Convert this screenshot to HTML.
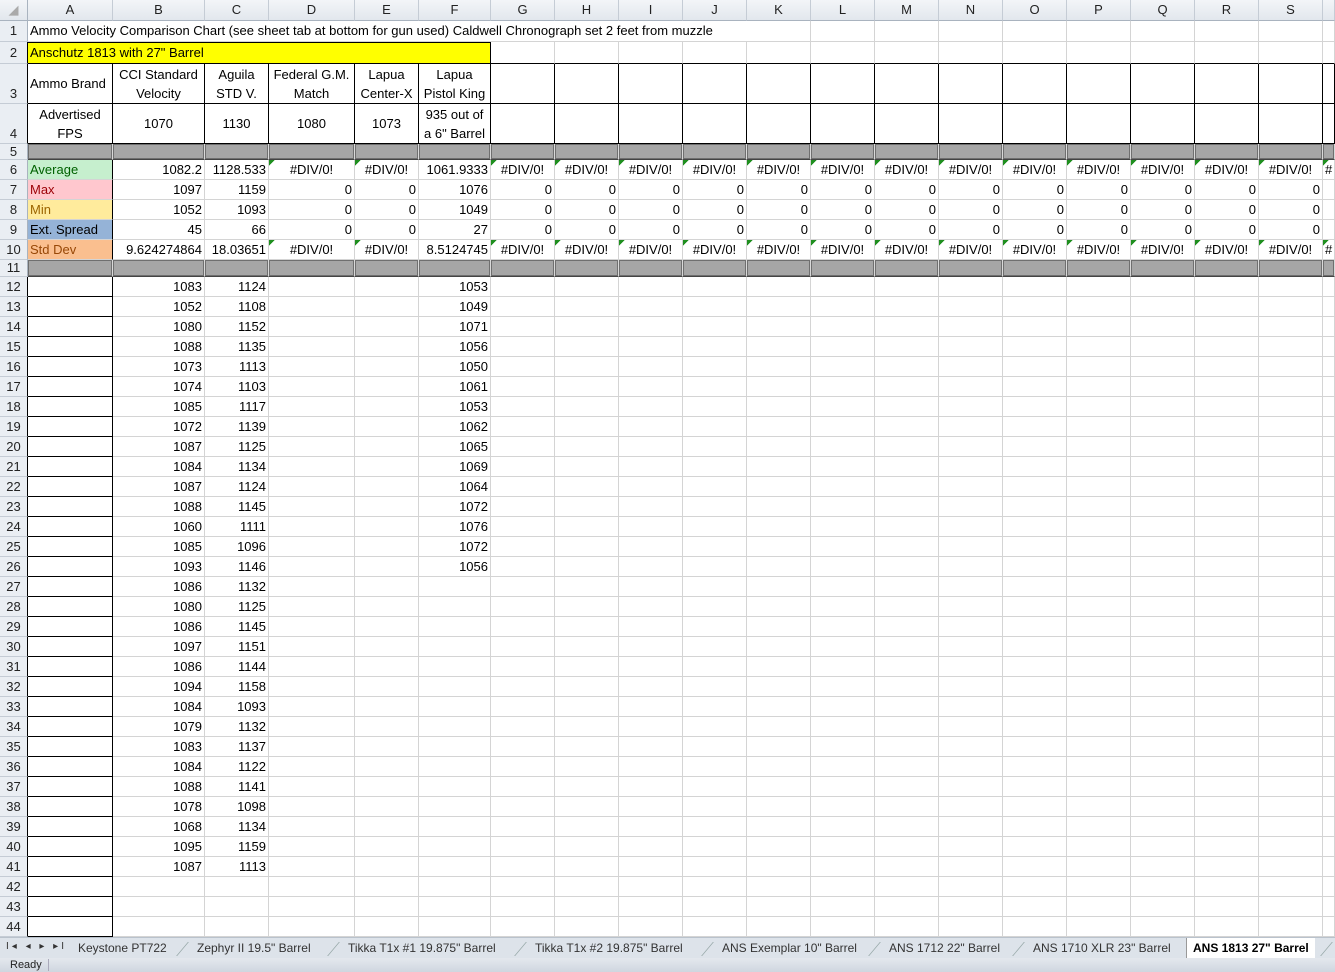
<!DOCTYPE html>
<html><head><meta charset="utf-8"><style>
*{margin:0;padding:0;box-sizing:content-box}
body{width:1335px;height:972px;overflow:hidden;background:#fff;font-family:"Liberation Sans",sans-serif;font-size:13px;color:#000;position:relative}
table{border-collapse:separate;border-spacing:0;table-layout:fixed;width:1335px;position:absolute;left:0;top:0}
td,th{border-right:1px solid #d4d4d4;border-bottom:1px solid #d4d4d4;padding:0 2px;white-space:nowrap;overflow:hidden;font-weight:normal;height:19px;line-height:19px;vertical-align:bottom}
th{background:#eaeef3;color:#222;text-align:center;border-right:1px solid #a9b3bf;border-bottom:1px solid #c5ccd5;padding:0}
tr.h th{background:linear-gradient(#f3f5f8,#e2e7ed);height:20px;line-height:20px;vertical-align:middle;border-bottom:1px solid #a9b3bf;border-right:1px solid #c5ccd5}
tr.h th:first-child{border-right:1px solid #a9b3bf}
tr.r20 td,tr.r20 th{height:19px;line-height:19px}
tr.r21 td,tr.r21 th{height:20px;line-height:20px}
tr.t td,tr.t th{height:39px;line-height:19px}
tr.s td,tr.s th{height:15px;line-height:15px}
tr.s2 td,tr.s2 th{height:16px;line-height:16px}
.n{text-align:right}
.c{text-align:center}
.b{border-right:1px solid #000;border-bottom:1px solid #000}
.bb{border-bottom:1px solid #000}
.lb{border-right:1px solid #000}
.y{background:#ffff00;border:1px solid #000;border-left:none}
tr.r21 td.y{height:19px}
.g{background:#a6a6a6;box-shadow:inset 0 0 0 1px #6f6f6f;border-right:1px solid #d9d9d9;border-bottom:1px solid #444}
.e{background:linear-gradient(135deg,#1f8f1f 0,#1f8f1f 4px,transparent 4px) no-repeat;text-align:center}
.av{background:#c6efce;color:#006100}
.mx{background:#ffc7ce;color:#9c0006}
.mn{background:#ffeb9c;color:#9c6500}
.sp{background:#95b3d7}
.sd{background:#fabf8f;color:#974706}
#tabs{position:absolute;left:0;top:937px;width:1335px;height:21px;background:#dde3ea;border-top:1px solid #b9c2cc;font-size:12px;color:#333}
#tabs span{position:absolute;top:3px;white-space:nowrap}
#tabs .act{background:#fff;font-weight:bold;color:#000;top:0;height:21px;line-height:21px;padding:0 6px;border-left:1px solid #999}
#status{position:absolute;left:0;top:958px;width:1335px;height:14px;background:linear-gradient(#e4e8ee,#cfd6df);font-size:11px;color:#222}
.sl{position:absolute;top:4px;width:12px;height:14px;border-left:1px solid #9aa;transform:skewX(-40deg)}
</style></head><body>
<table>
<colgroup><col style="width:28px"><col style="width:85px"><col style="width:92px"><col style="width:64px"><col style="width:86px"><col style="width:64px"><col style="width:72px"><col style="width:64px"><col style="width:64px"><col style="width:64px"><col style="width:64px"><col style="width:64px"><col style="width:64px"><col style="width:64px"><col style="width:64px"><col style="width:64px"><col style="width:64px"><col style="width:64px"><col style="width:64px"><col style="width:64px"><col style="width:12px"></colgroup>
<tr class="h"><th style="color:#aaa">◢<th>A<th>B<th>C<th>D<th>E<th>F<th>G<th>H<th>I<th>J<th>K<th>L<th>M<th>N<th>O<th>P<th>Q<th>R<th>S<th></tr>
<tr class="r21"><th>1<td colspan="11">Ammo Velocity Comparison Chart (see sheet tab at bottom for gun used) Caldwell Chronograph set 2 feet from muzzle<td><td><td><td><td><td><td><td><td></tr>
<tr class="r21"><th class="lb">2<td colspan="6" class="y">Anschutz 1813 with 27" Barrel<td class="bb"><td class="bb"><td class="bb"><td class="bb"><td class="bb"><td class="bb"><td class="bb"><td class="bb"><td class="bb"><td class="bb"><td class="bb"><td class="bb"><td class="bb"><td class="bb"></tr>
<tr class="t"><th class="lb">3<td class="b" style="vertical-align:middle">Ammo Brand<td class="b c">CCI Standard<br>Velocity<td class="b c">Aguila<br>STD V.<td class="b c">Federal G.M.<br>Match<td class="b c">Lapua<br>Center-X<td class="b c">Lapua<br>Pistol King<td class="b"><td class="b"><td class="b"><td class="b"><td class="b"><td class="b"><td class="b"><td class="b"><td class="b"><td class="b"><td class="b"><td class="b"><td class="b"><td class="b"></tr>
<tr class="t"><th class="lb">4<td class="b c">Advertised<br>FPS<td class="b c" style="vertical-align:middle">1070<td class="b c" style="vertical-align:middle">1130<td class="b c" style="vertical-align:middle">1080<td class="b c" style="vertical-align:middle">1073<td class="b c">935 out of<br>a 6" Barrel<td class="b"><td class="b"><td class="b"><td class="b"><td class="b"><td class="b"><td class="b"><td class="b"><td class="b"><td class="b"><td class="b"><td class="b"><td class="b"><td class="b"></tr>
<tr class="s"><th>5<td class="g"><td class="g"><td class="g"><td class="g"><td class="g"><td class="g"><td class="g"><td class="g"><td class="g"><td class="g"><td class="g"><td class="g"><td class="g"><td class="g"><td class="g"><td class="g"><td class="g"><td class="g"><td class="g"><td class="g"></tr>
<tr class="r20"><th>6<td class="av lb">Average<td class="n">1082.2<td class="n">1128.533<td class="e">#DIV/0!<td class="e">#DIV/0!<td class="n">1061.9333<td class="e">#DIV/0!<td class="e">#DIV/0!<td class="e">#DIV/0!<td class="e">#DIV/0!<td class="e">#DIV/0!<td class="e">#DIV/0!<td class="e">#DIV/0!<td class="e">#DIV/0!<td class="e">#DIV/0!<td class="e">#DIV/0!<td class="e">#DIV/0!<td class="e">#DIV/0!<td class="e">#DIV/0!<td class="e" style="text-align:left">#</tr>
<tr class="r20"><th>7<td class="mx lb">Max<td class="n">1097<td class="n">1159<td class="n">0<td class="n">0<td class="n">1076<td class="n">0<td class="n">0<td class="n">0<td class="n">0<td class="n">0<td class="n">0<td class="n">0<td class="n">0<td class="n">0<td class="n">0<td class="n">0<td class="n">0<td class="n">0<td></tr>
<tr class="r20"><th>8<td class="mn lb">Min<td class="n">1052<td class="n">1093<td class="n">0<td class="n">0<td class="n">1049<td class="n">0<td class="n">0<td class="n">0<td class="n">0<td class="n">0<td class="n">0<td class="n">0<td class="n">0<td class="n">0<td class="n">0<td class="n">0<td class="n">0<td class="n">0<td></tr>
<tr class="r20"><th>9<td class="sp lb">Ext. Spread<td class="n">45<td class="n">66<td class="n">0<td class="n">0<td class="n">27<td class="n">0<td class="n">0<td class="n">0<td class="n">0<td class="n">0<td class="n">0<td class="n">0<td class="n">0<td class="n">0<td class="n">0<td class="n">0<td class="n">0<td class="n">0<td></tr>
<tr class="r20"><th>10<td class="sd lb">Std Dev<td class="n">9.624274864<td class="n">18.03651<td class="e">#DIV/0!<td class="e">#DIV/0!<td class="n">8.5124745<td class="e">#DIV/0!<td class="e">#DIV/0!<td class="e">#DIV/0!<td class="e">#DIV/0!<td class="e">#DIV/0!<td class="e">#DIV/0!<td class="e">#DIV/0!<td class="e">#DIV/0!<td class="e">#DIV/0!<td class="e">#DIV/0!<td class="e">#DIV/0!<td class="e">#DIV/0!<td class="e">#DIV/0!<td class="e" style="text-align:left">#</tr>
<tr class="s2"><th>11<td class="g"><td class="g"><td class="g"><td class="g"><td class="g"><td class="g"><td class="g"><td class="g"><td class="g"><td class="g"><td class="g"><td class="g"><td class="g"><td class="g"><td class="g"><td class="g"><td class="g"><td class="g"><td class="g"><td class="g"></tr>
<tr class="r20"><th class="lb">12<td class="b"><td class="n">1083<td class="n">1124<td><td><td class="n">1053<td><td><td><td><td><td><td><td><td><td><td><td><td><td><td></tr>
<tr class="r20"><th class="lb">13<td class="b"><td class="n">1052<td class="n">1108<td><td><td class="n">1049<td><td><td><td><td><td><td><td><td><td><td><td><td><td><td></tr>
<tr class="r20"><th class="lb">14<td class="b"><td class="n">1080<td class="n">1152<td><td><td class="n">1071<td><td><td><td><td><td><td><td><td><td><td><td><td><td><td></tr>
<tr class="r20"><th class="lb">15<td class="b"><td class="n">1088<td class="n">1135<td><td><td class="n">1056<td><td><td><td><td><td><td><td><td><td><td><td><td><td><td></tr>
<tr class="r20"><th class="lb">16<td class="b"><td class="n">1073<td class="n">1113<td><td><td class="n">1050<td><td><td><td><td><td><td><td><td><td><td><td><td><td><td></tr>
<tr class="r20"><th class="lb">17<td class="b"><td class="n">1074<td class="n">1103<td><td><td class="n">1061<td><td><td><td><td><td><td><td><td><td><td><td><td><td><td></tr>
<tr class="r20"><th class="lb">18<td class="b"><td class="n">1085<td class="n">1117<td><td><td class="n">1053<td><td><td><td><td><td><td><td><td><td><td><td><td><td><td></tr>
<tr class="r20"><th class="lb">19<td class="b"><td class="n">1072<td class="n">1139<td><td><td class="n">1062<td><td><td><td><td><td><td><td><td><td><td><td><td><td><td></tr>
<tr class="r20"><th class="lb">20<td class="b"><td class="n">1087<td class="n">1125<td><td><td class="n">1065<td><td><td><td><td><td><td><td><td><td><td><td><td><td><td></tr>
<tr class="r20"><th class="lb">21<td class="b"><td class="n">1084<td class="n">1134<td><td><td class="n">1069<td><td><td><td><td><td><td><td><td><td><td><td><td><td><td></tr>
<tr class="r20"><th class="lb">22<td class="b"><td class="n">1087<td class="n">1124<td><td><td class="n">1064<td><td><td><td><td><td><td><td><td><td><td><td><td><td><td></tr>
<tr class="r20"><th class="lb">23<td class="b"><td class="n">1088<td class="n">1145<td><td><td class="n">1072<td><td><td><td><td><td><td><td><td><td><td><td><td><td><td></tr>
<tr class="r20"><th class="lb">24<td class="b"><td class="n">1060<td class="n">1111<td><td><td class="n">1076<td><td><td><td><td><td><td><td><td><td><td><td><td><td><td></tr>
<tr class="r20"><th class="lb">25<td class="b"><td class="n">1085<td class="n">1096<td><td><td class="n">1072<td><td><td><td><td><td><td><td><td><td><td><td><td><td><td></tr>
<tr class="r20"><th class="lb">26<td class="b"><td class="n">1093<td class="n">1146<td><td><td class="n">1056<td><td><td><td><td><td><td><td><td><td><td><td><td><td><td></tr>
<tr class="r20"><th class="lb">27<td class="b"><td class="n">1086<td class="n">1132<td><td><td><td><td><td><td><td><td><td><td><td><td><td><td><td><td><td></tr>
<tr class="r20"><th class="lb">28<td class="b"><td class="n">1080<td class="n">1125<td><td><td><td><td><td><td><td><td><td><td><td><td><td><td><td><td><td></tr>
<tr class="r20"><th class="lb">29<td class="b"><td class="n">1086<td class="n">1145<td><td><td><td><td><td><td><td><td><td><td><td><td><td><td><td><td><td></tr>
<tr class="r20"><th class="lb">30<td class="b"><td class="n">1097<td class="n">1151<td><td><td><td><td><td><td><td><td><td><td><td><td><td><td><td><td><td></tr>
<tr class="r20"><th class="lb">31<td class="b"><td class="n">1086<td class="n">1144<td><td><td><td><td><td><td><td><td><td><td><td><td><td><td><td><td><td></tr>
<tr class="r20"><th class="lb">32<td class="b"><td class="n">1094<td class="n">1158<td><td><td><td><td><td><td><td><td><td><td><td><td><td><td><td><td><td></tr>
<tr class="r20"><th class="lb">33<td class="b"><td class="n">1084<td class="n">1093<td><td><td><td><td><td><td><td><td><td><td><td><td><td><td><td><td><td></tr>
<tr class="r20"><th class="lb">34<td class="b"><td class="n">1079<td class="n">1132<td><td><td><td><td><td><td><td><td><td><td><td><td><td><td><td><td><td></tr>
<tr class="r20"><th class="lb">35<td class="b"><td class="n">1083<td class="n">1137<td><td><td><td><td><td><td><td><td><td><td><td><td><td><td><td><td><td></tr>
<tr class="r20"><th class="lb">36<td class="b"><td class="n">1084<td class="n">1122<td><td><td><td><td><td><td><td><td><td><td><td><td><td><td><td><td><td></tr>
<tr class="r20"><th class="lb">37<td class="b"><td class="n">1088<td class="n">1141<td><td><td><td><td><td><td><td><td><td><td><td><td><td><td><td><td><td></tr>
<tr class="r20"><th class="lb">38<td class="b"><td class="n">1078<td class="n">1098<td><td><td><td><td><td><td><td><td><td><td><td><td><td><td><td><td><td></tr>
<tr class="r20"><th class="lb">39<td class="b"><td class="n">1068<td class="n">1134<td><td><td><td><td><td><td><td><td><td><td><td><td><td><td><td><td><td></tr>
<tr class="r20"><th class="lb">40<td class="b"><td class="n">1095<td class="n">1159<td><td><td><td><td><td><td><td><td><td><td><td><td><td><td><td><td><td></tr>
<tr class="r20"><th class="lb">41<td class="b"><td class="n">1087<td class="n">1113<td><td><td><td><td><td><td><td><td><td><td><td><td><td><td><td><td><td></tr>
<tr class="r20"><th class="lb">42<td class="b"><td><td><td><td><td><td><td><td><td><td><td><td><td><td><td><td><td><td><td><td></tr>
<tr class="r20"><th class="lb">43<td class="b"><td><td><td><td><td><td><td><td><td><td><td><td><td><td><td><td><td><td><td><td></tr>
<tr class="r20"><th class="lb">44<td class="b"><td><td><td><td><td><td><td><td><td><td><td><td><td><td><td><td><td><td><td><td></tr>
<tr class="r20"><th class="lb">45<td class="b"><td><td><td><td><td><td><td><td><td><td><td><td><td><td><td><td><td><td><td><td></tr>
</table>
<div id="tabs">
<span style="left:6px;font-size:10px;letter-spacing:3px">I◂ ◂ ▸ ▸I</span>
<span style="left:78px">Keystone PT722</span><i class="sl" style="left:182px"></i>
<span style="left:197px">Zephyr II 19.5" Barrel</span><i class="sl" style="left:333px"></i>
<span style="left:348px">Tikka T1x #1 19.875" Barrel</span><i class="sl" style="left:520px"></i>
<span style="left:535px">Tikka T1x #2 19.875" Barrel</span><i class="sl" style="left:707px"></i>
<span style="left:722px">ANS Exemplar 10" Barrel</span><i class="sl" style="left:874px"></i>
<span style="left:889px">ANS 1712 22" Barrel</span><i class="sl" style="left:1018px"></i>
<span style="left:1033px">ANS 1710 XLR 23" Barrel</span>
<span class="act" style="left:1186px">ANS 1813 27" Barrel</span><i class="sl" style="left:1326px"></i>
</div>
<div id="status"><span style="position:absolute;left:10px;top:1px">Ready</span><i style="position:absolute;left:48px;top:1px;height:12px;border-left:1px solid #aab"></i></div>
</body></html>
